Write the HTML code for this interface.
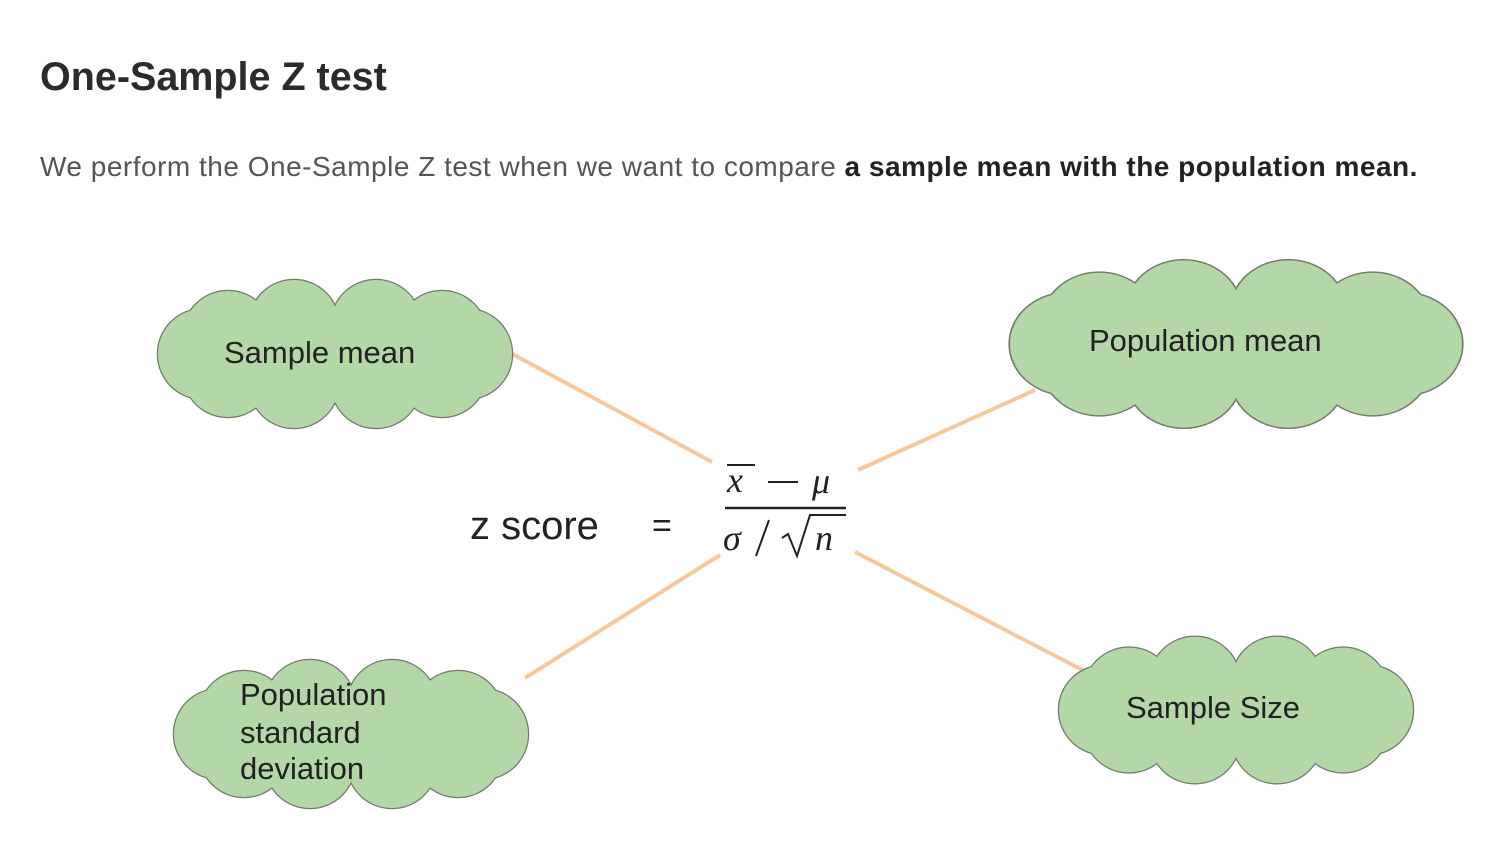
<!DOCTYPE html>
<html><head><style>
body{margin:0;background:#fff;width:1497px;height:850px;overflow:hidden;font-family:"Liberation Sans",sans-serif;}
h1{position:absolute;left:40px;top:55px;margin:0;font-size:39.5px;font-weight:bold;color:#2b2b2b;}
p{position:absolute;left:40px;top:151px;margin:0;font-size:28px;color:#555;white-space:nowrap;letter-spacing:0.5px}
p b{color:#222;letter-spacing:0.5px}
svg{position:absolute;left:0;top:0}
</style></head><body>
<h1>One-Sample Z test</h1>
<p>We perform the One-Sample Z test when we want to compare <b>a sample mean with the population mean.</b></p>
<svg width="1497" height="850">
<defs>
<g id="cs">
<ellipse cx="0" cy="0" rx="140" ry="45"/>
<circle cx="132" cy="0" r="45"/><circle cx="107" cy="18" r="45"/><circle cx="41" cy="29" r="45"/><circle cx="-41" cy="29" r="45"/><circle cx="-107" cy="18" r="45"/><circle cx="-132" cy="0" r="45"/><circle cx="-107" cy="-18" r="45"/><circle cx="-41" cy="-29" r="45"/><circle cx="41" cy="-29" r="45"/><circle cx="107" cy="-18" r="45"/>
</g>
<g id="cloud">
<use href="#cs" fill="#b3d7a6" stroke="#707a6c" stroke-width="2.5"/>
<use href="#cs" fill="#b3d7a6" stroke="none"/>
</g>
</defs>
<g stroke="#f9c89a" stroke-width="4">
<line x1="505" y1="350" x2="712" y2="462"/>
<line x1="858" y1="470" x2="1035" y2="390"/>
<line x1="525" y1="678" x2="720" y2="555"/>
<line x1="855" y1="552" x2="1092" y2="675"/>
</g>
<use href="#cloud" transform="translate(335,354)"/>
<use href="#cloud" transform="translate(1236,344) scale(1.277,1.13)"/>
<use href="#cloud" transform="translate(351,734)"/>
<use href="#cloud" transform="translate(1236,710) scale(1,0.99)"/>
<g font-family="Liberation Sans, sans-serif" font-size="31" fill="#222">
<text x="224" y="363">Sample mean</text>
<text x="1089" y="351">Population mean</text>
<text x="240" y="705">Population</text>
<text x="240" y="743">standard</text>
<text x="240" y="779">deviation</text>
<text x="1126" y="718">Sample Size</text>
<text x="470" y="539" font-size="40">z score</text>
<text x="652" y="537" font-size="34">=</text>
</g>
<g font-family="Liberation Serif, serif" font-style="italic" fill="#222">
<text x="727" y="492" font-size="36">x</text>
<line x1="727" y1="465" x2="755" y2="465" stroke="#222" stroke-width="2"/>
<line x1="768" y1="482" x2="798" y2="482" stroke="#222" stroke-width="2"/>
<text x="812" y="493" font-size="36">μ</text>
<line x1="725" y1="508" x2="846" y2="508" stroke="#222" stroke-width="2.5"/>
<text x="723" y="550" font-size="36">σ</text>
<line x1="769" y1="520" x2="756" y2="556" stroke="#222" stroke-width="2"/>
<path d="M782 538 L788 534 L797 556 L810 515 L846 515" fill="none" stroke="#222" stroke-width="2"/>
<text x="815" y="550" font-size="36">n</text>
</g>
</svg>
</body></html>
